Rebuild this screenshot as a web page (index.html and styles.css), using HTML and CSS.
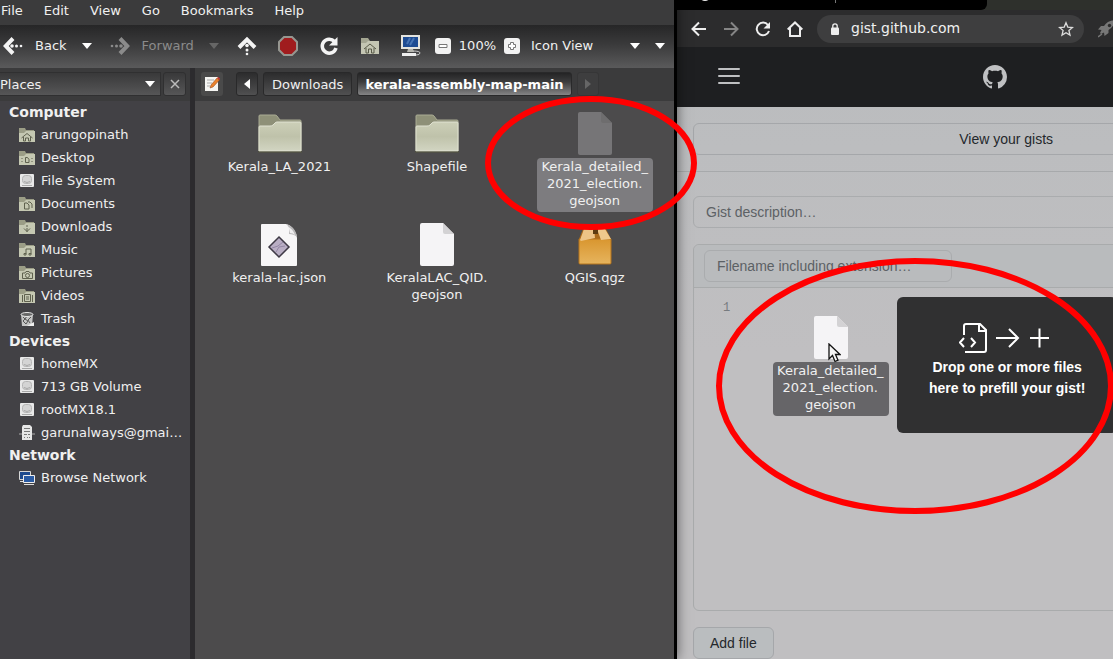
FILE: index.html
```html
<!DOCTYPE html>
<html lang="en">
<head>
<meta charset="utf-8">
<title>Drag files to a gist</title>
<link rel="stylesheet" href="styles.css">
</head>
<body>
<svg class="defs" width="0" height="0" aria-hidden="true">
  <defs>
    <linearGradient id="gFolder" x1="0" y1="0" x2="0" y2="1"><stop offset="0" stop-color="#cccfb8"/><stop offset=".5" stop-color="#bfc2aa"/><stop offset="1" stop-color="#d2d5c2"/></linearGradient>
    <linearGradient id="gBox" x1="0" y1="0" x2="0" y2="1"><stop offset="0" stop-color="#d9962f"/><stop offset="1" stop-color="#e6b45e"/></linearGradient>
    <symbol id="folder" viewBox="0 0 44 39">
      <path d="M1 37V2q0-1 1-1h15q1 0 2 1l3 4h20q1 0 1 1v30z" fill="#8e9078" stroke="#a9ab93"/>
      <path d="M1 37V13q0-1 1-1h10q2 0 3-1l2-2q1-1 2-1h23q1 0 1 1v28z" fill="url(#gFolder)" stroke="#e0e2d2"/>
      <path d="M0 38h44" stroke="#55563f"/>
    </symbol>
    <symbol id="page" viewBox="0 0 36 44">
      <path d="M3 0h21l11 11v30q0 2-2 2H3q-2 0-2-2V2q0-2 2-2z" fill="#f5f4f6"/>
      <path d="M24 0l11 11H26q-2 0-2-2z" fill="#d3d2d4"/>
    </symbol>
    <symbol id="mini" viewBox="0 0 16 16">
      <path d="M0 15V1h6l1 2h8v12z" fill="#9b9d86"/><path d="M0 15V6h5l2-2h9v11z" fill="#c5c8b2"/>
    </symbol>
    <symbol id="disk" viewBox="0 0 16 16">
      <rect x="1" y="1" width="14" height="13" rx="1" fill="#e8e8e8"/><rect x="3.500" y="2.500" width="9" height="8" rx="3" fill="#d4d4d4" stroke="#b4b4b4"/><path d="M5 8.500q3 2 6 0M3 12.500h10" stroke="#a8a8a8" fill="none"/>
    </symbol>
  </defs>
</svg>

<main class="desktop">
  <section class="files" aria-label="File manager">
    <nav class="menubar">
      <button>File</button><button>Edit</button><button>View</button><button>Go</button><button>Bookmarks</button><button>Help</button>
    </nav>
    <div class="toolbar">
      <button class="nav">
        <svg width="20" height="20" viewBox="0 0 20 20"><path d="M10 2.500L2.800 10l7.200 7.500" fill="none" stroke="#f4f4f4" stroke-width="4"/><g fill="#f4f4f4"><circle cx="9" cy="10" r="1.800"/><circle cx="13.500" cy="10" r="1.500"/><circle cx="18" cy="10" r="1.300"/></g></svg>
        Back
      </button>
      <button class="drop" aria-label="Back history"><svg width="10" height="6"><path d="M0 0h10L5 6z" fill="#fff"/></svg></button>
      <button class="nav off">
        <svg width="20" height="20" viewBox="0 0 20 20"><path d="M10 2.500l7.200 7.500-7.200 7.500" fill="none" stroke="#8b8b8b" stroke-width="4"/><g fill="#8b8b8b"><circle cx="11" cy="10" r="1.800"/><circle cx="6.500" cy="10" r="1.500"/><circle cx="2" cy="10" r="1.300"/></g></svg>
        Forward
      </button>
      <button class="drop" aria-label="Forward history"><svg width="10" height="6"><path d="M0 0h10L5 6z" fill="#666"/></svg></button>
      <div class="tools">
        <button aria-label="Up"><svg width="20" height="20" viewBox="0 0 20 20"><path d="M2 11.500L10 3.500l8 8" fill="none" stroke="#f4f4f4" stroke-width="4"/><g fill="#f4f4f4"><circle cx="10" cy="9.500" r="1.800"/><circle cx="10" cy="14" r="1.500"/><circle cx="10" cy="18" r="1.300"/></g></svg></button>
        <button aria-label="Stop"><svg width="20" height="20" viewBox="0 0 20 20"><path d="M6 1h8l5 5v8l-5 5H6l-5-5V6z" fill="#a01c1e" stroke="#969690" stroke-width="2"/></svg></button>
        <button aria-label="Reload"><svg width="20" height="20" viewBox="0 0 20 20"><path d="M15.500 5.500A7 7 0 1 0 17 12" fill="none" stroke="#f4f4f4" stroke-width="3.500"/><path d="M18.500 1v8.500H10z" fill="#f4f4f4"/></svg></button>
        <button aria-label="Home"><svg width="20" height="20" viewBox="0 0 20 20"><path d="M1 18V2h7l2 3h9v13z" fill="#a4a692"/><path d="M1 18V7h5l2-2h11v13z" fill="#c4c6b3"/><path d="M4 13l6-5 6 5M6 12v5h2.500v-4h3v4H14v-5" fill="none" stroke="#585a48"/></svg></button>
        <button aria-label="Computer"><svg width="20" height="22" viewBox="0 0 20 22"><path d="M0 0h19v14H0z" fill="#e4e4df"/><path d="M2 2h15v10H2z" fill="#1e4c93"/><path d="M6 9l3-6M9 10l4-7" stroke="#4674b4" stroke-width="2"/><path d="M7 14h5l1 3H6z" fill="#b5b5ae"/><path d="M1 18h14v3H1z" fill="#eee"/><path d="M12 16q7 0 7 2t-4 2" fill="none" stroke="#ccc"/></svg></button>
      </div>
      <div class="zoomer">
        <button aria-label="Zoom out"><svg width="16" height="16"><rect width="16" height="16" rx="3" fill="#f2f2f2"/><path d="M4 6.500h8v3H4z" fill="#fff" stroke="#777"/></svg></button>
        <span>100%</span>
        <button aria-label="Zoom in"><svg width="16" height="16"><rect width="16" height="16" rx="3" fill="#f2f2f2"/><path d="M6.500 4.500h3v2h2v3h-2v2h-3v-2h-2v-3h2z" fill="#fff" stroke="#777"/></svg></button>
      </div>
      <div class="pick view">
        <select aria-label="View mode"><option>Icon View</option></select>
        <svg width="10" height="6"><path d="M0 0h10L5 6z" fill="#fff"/></svg>
      </div>
      <button class="drop" aria-label="More"><svg width="10" height="6"><path d="M0 0h10L5 6z" fill="#fff"/></svg></button>
    </div>

    <div class="split">
      <aside class="side">
        <div class="sidehead">
          <div class="pick places">
            <select aria-label="Side pane"><option>Places</option></select>
            <svg width="10" height="6"><path d="M0 0h10L5 6z" fill="#fff"/></svg>
          </div>
          <button class="close" aria-label="Close side pane"><svg width="10" height="10"><path d="M1 1l8 8M9 1L1 9" stroke="#bbb" stroke-width="1.500"/></svg></button>
        </div>
        <h2>Computer</h2>
        <ul>
          <li><svg width="16" height="16"><use href="#mini"/><path d="M2.500 11L8 6.500l5.500 4.500M4.500 10v4h2v-3h3v3h2v-4" fill="none" stroke="#5f614e"/></svg>arungopinath</li>
          <li><svg width="16" height="16"><use href="#mini"/><path d="M6.500 7.500h2l1.500 2v3H6.500zM3 8v1M3 11v1M13 8v1M13 11v1" fill="none" stroke="#5f614e"/></svg>Desktop</li>
          <li><svg width="16" height="16"><use href="#disk"/></svg>File System</li>
          <li><svg width="16" height="16"><use href="#mini"/><path d="M5.500 13V7H8l2 2v4zM9 6h2l2 2v4" fill="none" stroke="#5f614e"/></svg>Documents</li>
          <li><svg width="16" height="16"><use href="#mini"/><path d="M8 6v2M8 9v4M5 9.500L8 12.500l3-3" fill="none" stroke="#5f614e"/></svg>Downloads</li>
          <li><svg width="16" height="16"><use href="#mini"/><path d="M7 12V7h5v5M5 11.500h2v1.500H5zM10 11.500h2v1.500h-2z" fill="none" stroke="#5f614e"/></svg>Music</li>
          <li><svg width="16" height="16"><use href="#mini"/><path d="M3.500 8H6l1-1.500h3L11 8h2.500v5.500h-10z" fill="none" stroke="#5f614e"/><circle cx="8.500" cy="10.500" r="2" fill="none" stroke="#5f614e"/></svg>Pictures</li>
          <li><svg width="16" height="16"><use href="#mini"/><path d="M5.500 6.500h6v7h-6zM7 9h3M7 11h3M3.500 7v7M13.500 7v7" fill="none" stroke="#5f614e"/></svg>Videos</li>
          <li><svg width="16" height="16"><path d="M2 3h12l-1 12H3z" fill="#c4c4c4"/><path d="M4 6l2 2-2 2 3 3M8 5l-2 3 3 2-2 3M12 6l-3 3 2 3" stroke="#555" fill="none"/><ellipse cx="8" cy="3.500" rx="6" ry="2" fill="#666" stroke="#e8e8e8"/><path d="M8 15l7-4v4z" fill="#eee"/></svg>Trash</li>
        </ul>
        <h2>Devices</h2>
        <ul>
          <li><svg width="16" height="16"><use href="#disk"/></svg>homeMX</li>
          <li><svg width="16" height="16"><use href="#disk"/></svg>713 GB Volume</li>
          <li><svg width="16" height="16"><use href="#disk"/></svg>rootMX18.1</li>
          <li><svg width="16" height="16"><path d="M0 9h16" stroke="#aaa"/><path d="M3 2l1-2h7l2 2v13H3z" fill="#e6e6e6"/><path d="M5 3.500h6M5 6.500h6M5 9.500h3M9 9.500h2M5 12.500h1M8 12.500h1M10 12.500h1" stroke="#777"/></svg>garunalways@gmai…</li>
        </ul>
        <h2>Network</h2>
        <ul>
          <li><svg width="16" height="16"><path d="M.5 1.500h11v8H.5z" fill="#1d4a8e" stroke="#d8d8d8"/><path d="M4.500 5.500h11v7h-11z" fill="#2a5ba4" stroke="#eee"/><path d="M1 11.500h3M5 14.500h10" stroke="#ddd"/></svg>Browse Network</li>
        </ul>
      </aside>

      <div class="pane">
        <div class="pathbar">
          <button class="edit" aria-label="Edit location"><svg width="16" height="16"><path d="M1 1h13v14H1z" fill="#f5f5f2"/><path d="M3 4h7M3 7h5M3 10h3" stroke="#aaa"/><path d="M6 12l1-3 6-7 2.500 2L9 11z" fill="#e9822c" stroke="#8b3f16" stroke-width=".5"/><path d="M13 2l2.500 2 .5-1.500L14 1z" fill="#c33"/></svg></button>
          <button class="crumb step" aria-label="Scroll left"><svg width="6" height="10"><path d="M6 0v10L0 5z" fill="#fff"/></svg></button>
          <button class="crumb">Downloads</button>
          <button class="crumb current">kerala-assembly-map-main</button>
          <button class="crumb step faded" aria-label="Scroll right"><svg width="6" height="10"><path d="M0 0v10l6-5z" fill="#666"/></svg></button>
        </div>
        <div class="grid">
          <figure><svg width="44" height="43" viewBox="0 -2 44 43"><use href="#folder" width="44" height="39"/></svg><figcaption>Kerala_LA_2021</figcaption></figure>
          <figure><svg width="44" height="43" viewBox="0 -2 44 43"><use href="#folder" width="44" height="39"/></svg><figcaption>Shapefile</figcaption></figure>
          <figure class="chosen"><svg width="36" height="43"><use href="#page" width="36" height="44"/></svg><figcaption>Kerala_detailed_<br>2021_election.<br>geojson</figcaption></figure>
          <figure><svg width="38" height="43"><path d="M0 2q0-1 1-1h24q5 1 8 6 3 4 3 8v27q0 1-1 1H1q-1 0-1-1z" fill="#f7f6f7"/><path d="M25 1q4 2 3 10 5 0 8 3-1-6-4-9t-7-4z" fill="#b9b8b9"/><path d="M26 3q3 3 3 7 3 0 5 2-2-6-8-9z" fill="#efeeef"/><path d="M18 14l10 10-10 10L8 24z" fill="#b9aec4" stroke="#3f3a46" stroke-width="1.500"/><path d="M11 25l6-2 5-4M15 29l3-5 6-1" stroke="#9588a6" fill="none"/></svg><figcaption>kerala-lac.json</figcaption></figure>
          <figure><svg width="36" height="43"><use href="#page" width="36" height="44"/></svg><figcaption>KeralaLAC_QID.<br>geojson</figcaption></figure>
          <figure><svg width="34" height="43"><path d="M5 6h23l5 10v24q0 1-1 1H2q-1 0-1-1V16z" fill="#a8691a"/><path d="M1 16h32v24q0 1-1 1H2q-1 0-1-1z" fill="url(#gBox)" stroke="#b5751c"/><path d="M6 6h10l1 9-14 3-1-1z" fill="#edc486"/><path d="M19 6h8l6 10-10 1z" fill="#efc98c"/><path d="M15 6h5v5h-5z" fill="#5c3b10"/></svg><figcaption>QGIS.qgz</figcaption></figure>
        </div>
      </div>
    </div>
  </section>

  <section class="browser" aria-label="Web browser">
    <div class="tabs"><div class="tab">
      <svg width="300" height="10"><circle cx="28" cy="-5" r="6" fill="#eee"/><path d="M158.500 0v3" stroke="#777"/></svg>
    </div></div>
    <div class="chrome">
      <button aria-label="Back"><svg width="16" height="16" viewBox="0 0 16 16" fill="none" stroke="#eee" stroke-width="2"><path d="M15 8H2M8 1.500L1.500 8 8 14.500"/></svg></button>
      <button aria-label="Forward"><svg width="16" height="16" viewBox="0 0 16 16" fill="none" stroke="#858585" stroke-width="2"><path d="M1 8h13M8 1.500L14.500 8 8 14.500"/></svg></button>
      <button aria-label="Reload"><svg width="16" height="16" viewBox="0 0 16 16"><path d="M13 4A6.300 6.300 0 1 0 14 10" fill="none" stroke="#eee" stroke-width="2"/><path d="M15 1v6.500H8.500z" fill="#eee"/></svg></button>
      <button aria-label="Home"><svg width="16" height="16" viewBox="0 0 16 16" fill="none" stroke="#eee" stroke-width="2"><path d="M.7 8.500L8 1.500l7.300 7M3 7v8h10V7"/></svg></button>
      <label class="omni">
        <svg width="10" height="12" viewBox="0 0 10 12"><rect x="1" y="4.500" width="8" height="7.500" rx="1" fill="#eee"/><path d="M2.800 5V3a2.200 2.200 0 0 1 4.400 0v2" fill="none" stroke="#eee" stroke-width="1.300"/></svg>
        <input type="text" value="gist.github.com" aria-label="Address">
        <svg width="16" height="16" viewBox="0 0 16 16"><path d="M8 1.800l1.800 4.300 4.700.4-3.600 3 1.100 4.600L8 11.700l-4 2.400 1.100-4.600-3.600-3 4.700-.4z" fill="none" stroke="#ddd" stroke-width="1.300"/></svg>
      </label>
      <svg class="rocket" width="20" height="18" viewBox="0 0 20 18"><path d="M17 0q-7 0-11 6H3L0 9.500l3.500.5L2 13l1 1 3-1.500.5 3.500 4-3v-3q6-4 6.500-10z" fill="#777"/><circle cx="11.500" cy="5.500" r="1.700" fill="#2c2c2c"/><path d="M0 17l4-3" stroke="#777" stroke-width="1.500"/></svg>
    </div>

    <div class="site">
      <header class="top">
        <button class="burger" aria-label="Menu"><svg width="22" height="18"><path d="M1 2h20M1 9h20M1 16h20" stroke="#bfc0c2" stroke-width="2" stroke-linecap="round"/></svg></button>
        <a class="logo" href="#" aria-label="Homepage"><svg width="24" height="24" viewBox="0 0 16 16"><path fill="#bfc0c2" d="M8 0C3.580 0 0 3.580 0 8c0 3.540 2.290 6.530 5.470 7.590.4.070.55-.17.55-.38 0-.19-.01-.82-.01-1.490-2.010.37-2.530-.49-2.690-.94-.09-.23-.48-.94-.82-1.130-.28-.15-.68-.52-.01-.53.63-.01 1.080.58 1.230.82.720 1.210 1.870.87 2.330.66.070-.52.28-.87.51-1.070-1.780-.2-3.640-.89-3.640-3.950 0-.87.31-1.590.82-2.150-.08-.2-.36-1.020.08-2.120 0 0 .67-.21 2.200.82.640-.18 1.320-.27 2-.27s1.360.09 2 .27c1.530-1.040 2.200-.82 2.200-.82.440 1.100.16 1.920.08 2.120.51.56.82 1.270.82 2.150 0 3.070-1.870 3.750-3.650 3.950.29.25.54.73.54 1.480 0 1.070-.01 1.930-.01 2.200 0 .21.15.46.55.38A8.010 8.010 0 0 0 16 8c0-4.420-3.580-8-8-8z"/></svg></a>
      </header>
      <div class="gists"><button class="btn">View your gists</button></div>
      <form class="gist">
        <input class="field" type="text" placeholder="Gist description…" aria-label="Gist description">
        <div class="editor">
          <div class="editbar"><input class="field" type="text" placeholder="Filename including extension…" aria-label="Filename"></div>
          <div class="code"><span>1</span></div>
          <div class="prefill">
            <svg width="96" height="30" viewBox="0 0 96 30" fill="none" stroke="#fff" stroke-width="2"><path d="M5 12V3q0-2 2-2h14l6 6v20q0 2-2 2H6M20 1v7h7M5 15l-4 4.500 4 4.500M12 15l4 4.500-4 4.500M37 15h22M50 6l9 9-9 9M71 15h19M80.500 5.500v19"/></svg>
            <strong>Drop one or more files<br>here to prefill your gist!</strong>
          </div>
        </div>
        <button class="btn add" type="button">Add file</button>
      </form>
    </div>
  </section>

  <figure class="dragged">
    <svg width="36" height="43"><use href="#page" width="36" height="44"/></svg>
    <figcaption>Kerala_detailed_<br>2021_election.<br>geojson</figcaption>
    <svg class="pointer" width="13" height="20" viewBox="0 0 13 20"><path d="M1 1v15l3.500-3.500L7 18.500l3-1.300-2.500-5.700H12z" fill="#f5f5f5" stroke="#111" stroke-width="1.300"/></svg>
  </figure>
  <svg class="marks" width="1113" height="659" fill="none" stroke="#f00" stroke-width="6" aria-hidden="true">
    <ellipse cx="591" cy="163" rx="103" ry="64"/>
    <ellipse cx="915" cy="386" rx="196" ry="125"/>
  </svg>
</main>
</body>
</html>
```
FILE: styles.css
```css
* { box-sizing: border-box; }

body {
  margin: 0;
  overflow: hidden;
  background: #000;
  color: #f0f0f0;
  font: 13px/17px "DejaVu Sans", sans-serif;
}

button, select, input {
  margin: 0;
  padding: 0;
  border: 0;
  background: none;
  color: inherit;
  font: inherit;
  border-radius: 0;
}

svg { display: block; flex: none; }
figure, h2, ul { margin: 0; padding: 0; }
.defs { position: absolute; }

.desktop {
  position: relative;
  display: grid;
  grid-template-columns: minmax(0, 677fr) minmax(0, 436fr);
  height: 100vh;
  overflow: hidden;
}

/* File manager */
.files {
  z-index: 1;
  display: flex;
  flex-direction: column;
  border-right: 3px solid #000;
  background: #3b3b3c;
  box-shadow: 0 0 12px rgba(0, 0, 0, .55);
}

.menubar { display: flex; gap: 21px; height: 25px; padding: 0 1px 5px; }

.toolbar {
  display: flex;
  align-items: center;
  height: 43px;
  padding: 0 0 2px 3px;
  background: linear-gradient(#262627, #3a3a3b 45%, #5a5a5b);
}
.nav { display: flex; align-items: center; gap: 12px; }
.off { color: #8b8b8b; }
.drop { margin: 0 18px 0 15px; }
.tools { display: flex; align-items: center; gap: 21px; }
.zoomer { display: flex; align-items: center; gap: 8px; margin: 0 11px 0 14px; }
.pick { position: relative; }
.pick select { width: 100%; height: 100%; appearance: none; }
.pick svg { position: absolute; right: 0; top: 50%; margin-top: -3px; pointer-events: none; }
.view { width: 109px; height: 24px; }
.view ~ .drop { margin-right: 0; }

.split { display: flex; flex: 1; min-height: 0; }

.side {
  flex: none;
  width: 195px;
  border-right: 5px solid #2c2b2e;
  background: #424145;
}
.sidehead { display: flex; gap: 2px; height: 33px; padding: 4px 4px 0 0; background: #3b3b3c; }
.places, .close { height: 24px; border: 1px solid #303031; background: linear-gradient(#39393a, #565657); }
.places { flex: 1; border-left: 0; }
.places svg { right: 5px; }
.close { display: grid; place-items: center; width: 23px; border-radius: 3px; }

.side h2 { height: 22px; padding-left: 9px; font-size: 14px; line-height: 22px; }
.side ul { list-style: none; }
.side li { display: flex; align-items: center; gap: 6px; height: 23px; padding-left: 19px; white-space: nowrap; }

.pane { flex: 1; min-width: 0; background: #4c4b4c; }
.pathbar { display: flex; gap: 5px; height: 33px; padding: 4px 0 5px 6px; background: #3b3b3c; }
.edit { display: grid; place-items: center; width: 22px; margin-right: 8px; border-radius: 3px; background: #4a4a4a; }
.crumb {
  flex: none;
  padding: 0 8px;
  border: 1px solid #29292a;
  border-radius: 3px;
  background: linear-gradient(#2c2c2d, #505051);
}
.step { display: grid; place-items: center; width: 22px; padding: 0; }
.current { padding: 0 7px; background: linear-gradient(#242425, #3c3c3d 40%, #848485); color: #fff; font-weight: bold; }
.faded { border-color: #363637; background: #3e3e3f; }

.grid { display: grid; grid-template-columns: repeat(3, 1fr); grid-auto-rows: 111px; padding: 11px 0 0 6px; }
.grid figure, .dragged { display: flex; flex-direction: column; align-items: center; gap: 3px; }
figcaption { padding: 0 5px 3px 4px; border-radius: 4px; text-align: center; white-space: nowrap; }
.chosen svg { opacity: .25; }
.chosen figcaption { background: #7d7c7f; }

/* Browser */
.browser { display: flex; flex-direction: column; min-width: 0; overflow: hidden; background: #bebec0; }
.tabs { height: 10px; background: #2e302c; }
.tab { width: 71%; height: 10px; overflow: hidden; border-radius: 0 0 6px 0; background: #000; }
.chrome { display: flex; align-items: center; gap: 16px; height: 37px; padding-left: 14px; background: #2c2c2d; }
.omni {
  display: flex;
  flex: none;
  align-items: center;
  gap: 11px;
  width: 267px;
  height: 28px;
  padding: 0 10px 0 13px;
  margin-left: -2px;
  border-radius: 14px;
  background: #3e3e3f;
}
.omni input { flex: 1; min-width: 0; font-size: 14px; }
.rocket { margin-left: -2px; }

.site {
  display: flex;
  flex: 1;
  flex-direction: column;
  width: 151%;
  background: linear-gradient(#babcbe, #c0bfc1 50%);
  color: #24282c;
  font: 14px/21px "Liberation Sans", sans-serif;
}
.top { display: grid; grid-template-columns: 1fr auto 1fr; align-items: center; height: 60px; padding: 0 63px 0 41px; background: #1e1f21; }
.burger { justify-self: start; padding-bottom: 2px; }
.gists { height: 65px; padding: 16px; border-bottom: 1px solid #a7a9ab; }
.btn, .field { height: 32px; border: 1px solid #a5a7aa; border-radius: 6px; }
.gists .btn { width: 100%; }
.gist { display: flex; flex: 1; flex-direction: column; align-items: start; padding: 24px 16px 0; }
.field { width: 100%; padding: 0 12px; border-color: #aaacae; }
.field::placeholder { color: #5c6165; opacity: 1; }
.editor { position: relative; width: 100%; height: 367px; margin: 16px 0; border: 1px solid #a9abac; border-radius: 6px; }
.editbar { height: 43px; padding: 5px 10px; border-bottom: 1px solid #a9abac; background: #b9bbbd; border-radius: 6px 6px 0 0; }
.editbar .field { width: 248px; }
.code { padding: 10px 29px; color: #777b7f; font: 12px/20px "Liberation Mono", monospace; }
.prefill {
  position: absolute;
  top: 52px;
  left: 50%;
  display: flex;
  flex-direction: column;
  align-items: center;
  gap: 4px;
  width: 220px;
  height: 136px;
  margin-left: -109px;
  padding-top: 26px;
  border-radius: 6px;
  background: #303031;
  color: #fff;
  text-align: center;
}
.add { padding: 0 16px; background: #babdbf; }

/* Drag image and annotations float over both windows */
.dragged { position: absolute; z-index: 2; top: 316px; left: 773px; }
.dragged figcaption { background: #666568; }
.pointer { position: absolute; top: 27px; left: 55px; }
.marks { position: absolute; z-index: 3; top: 0; left: 0; pointer-events: none; }
```
